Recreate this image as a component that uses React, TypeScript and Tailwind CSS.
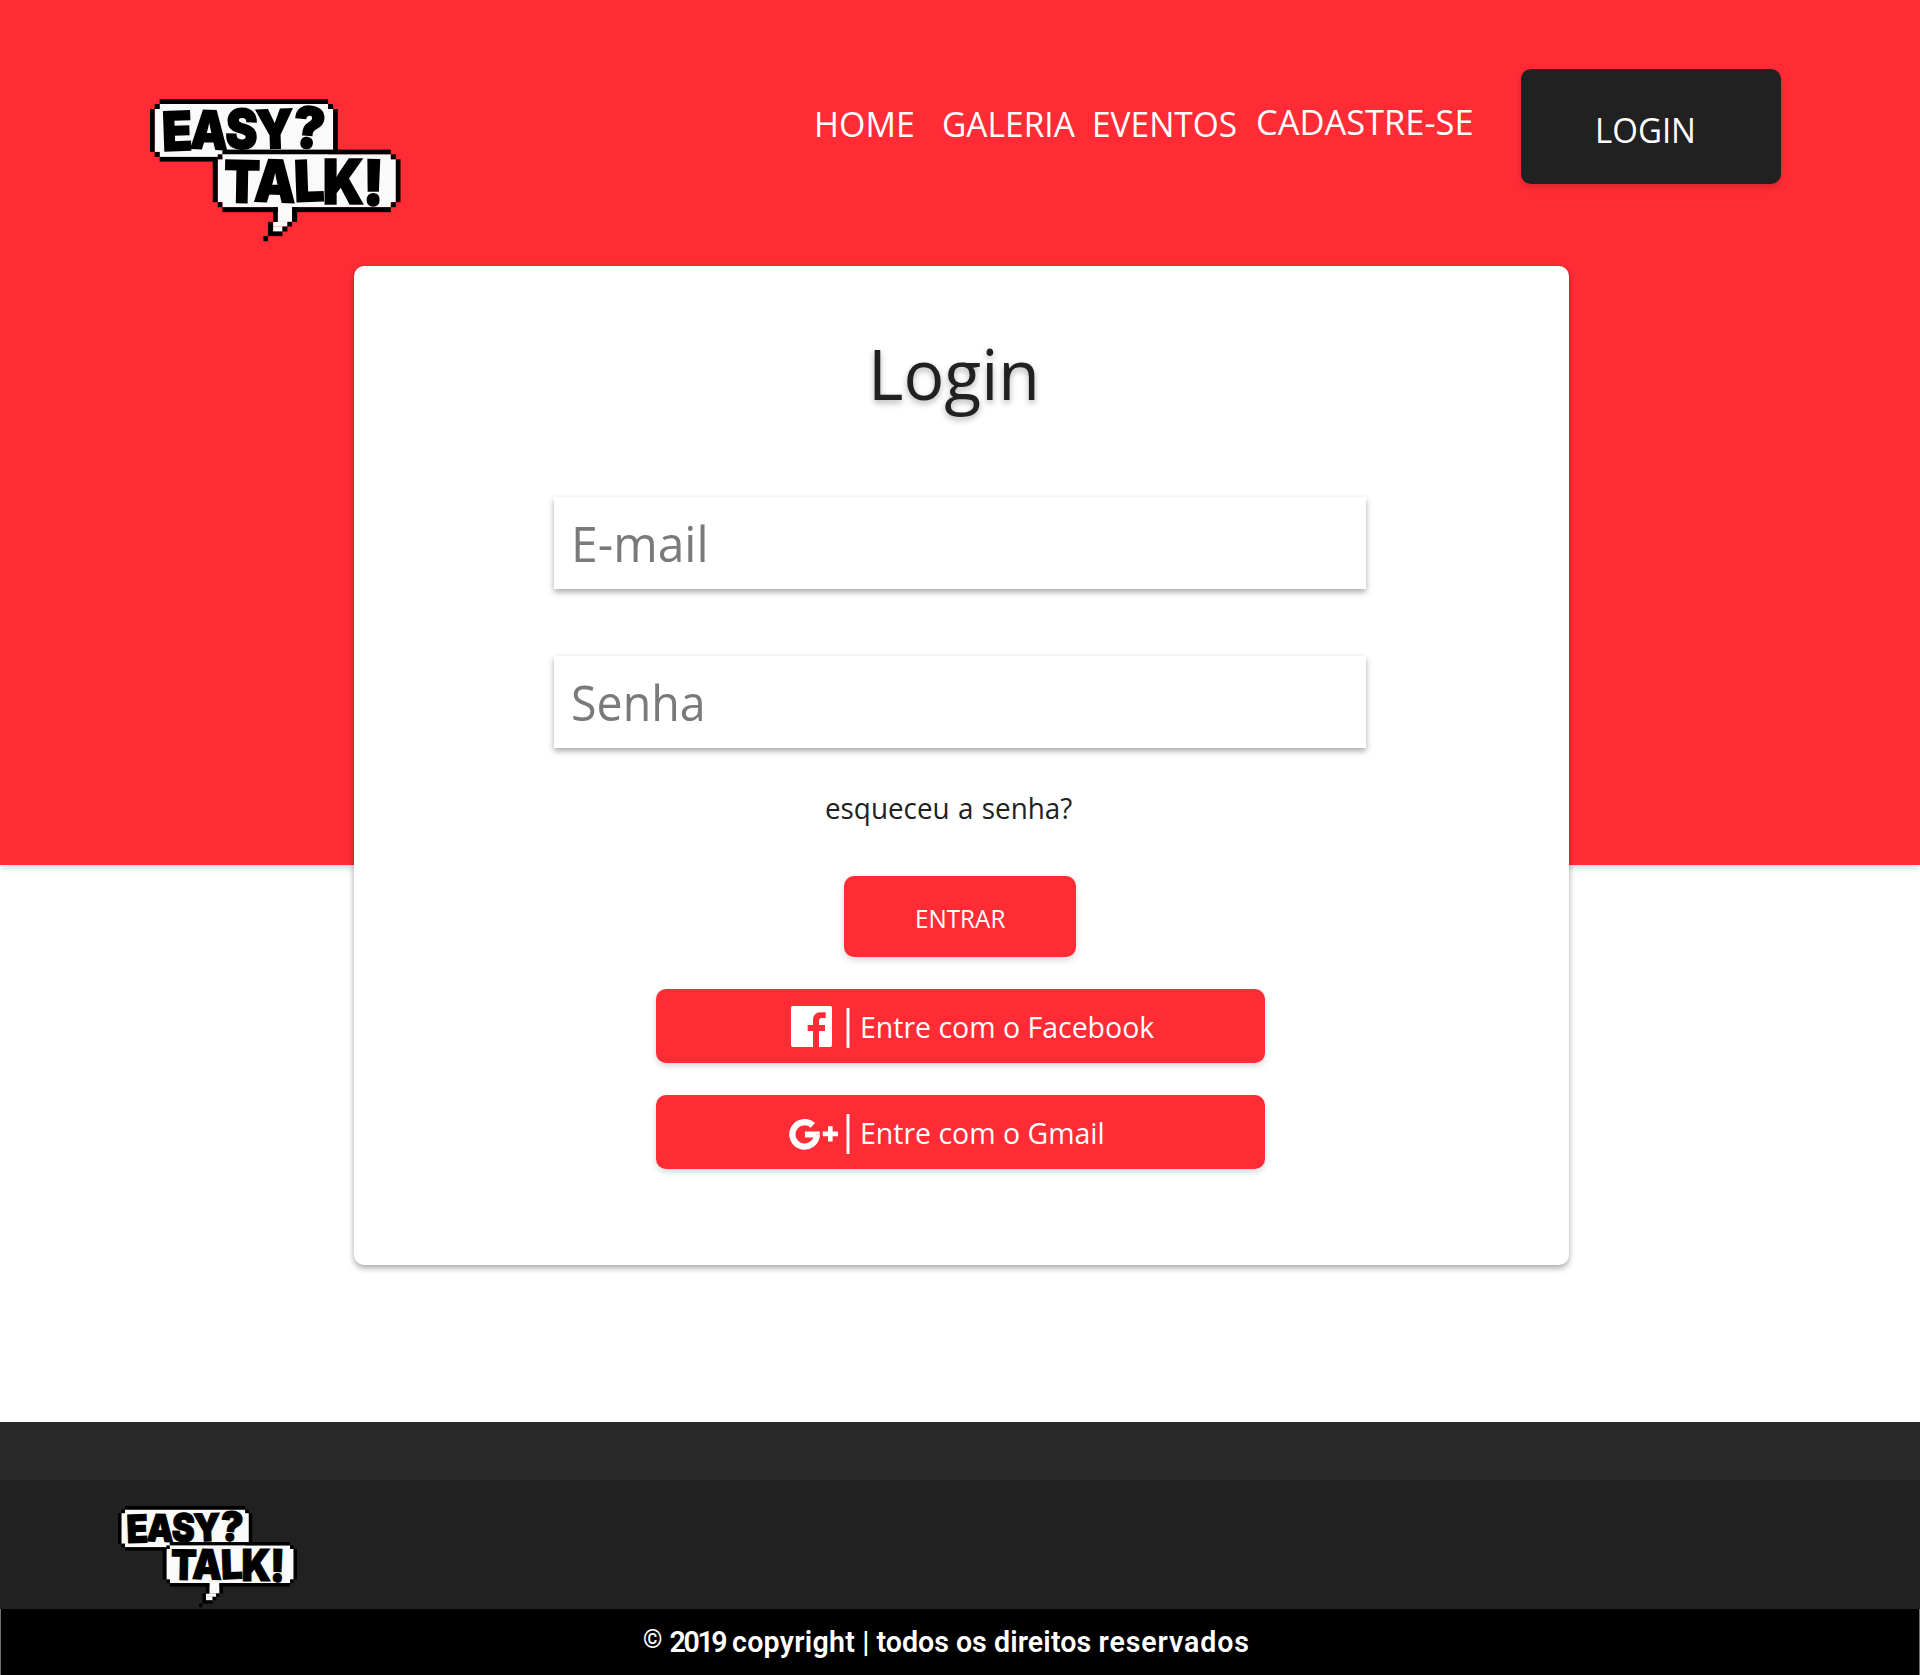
import React from 'react';

type Box = [x: number, y: number, w: number, h: number];

const logoBlack: Box[] = [
  [88, 57, 505, 15], [73, 72, 15, 15], [59, 87, 14, 129], [73, 216, 15, 15], [88, 231, 174, 14],
  [593, 72, 15, 15], [608, 87, 14, 125],
  [276, 209, 505, 14], [262, 223, 14, 15], [781, 223, 15, 15], [247, 238, 15, 129], [796, 238, 14, 129],
  [262, 367, 14, 15], [781, 367, 15, 15], [276, 382, 166, 15], [485, 382, 296, 15],
  [428, 382, 14, 44], [485, 382, 15, 44], [471, 426, 14, 14], [456, 440, 15, 15],
  [428, 455, 28, 14], [413, 426, 15, 43], [399, 469, 14, 15],
];

const logoWhiteBack: Box[] = [[73, 87, 535, 129], [88, 72, 505, 159]];
const logoWhiteFront: Box[] = [
  [262, 238, 534, 129], [276, 223, 505, 159], [442, 380, 43, 46], [428, 426, 43, 14], [428, 440, 28, 15],
];

/* character, left, baseline, width, font size, rotation */
const logoLetters: [string, number, number, number, number, number][] = [
  ['E', 95, 212, 90, 162, -2],
  ['A', 181, 207, 112, 158, 2],
  ['S', 286, 206, 96, 164, 2],
  ['Y', 376, 205, 113, 160, -2],
  ['?', 488, 204, 96, 170, 5],
  ['T', 281, 368, 108, 174, 1],
  ['A', 372, 366, 124, 174, 2],
  ['L', 491, 364, 90, 170, -2],
  ['K', 577, 373, 123, 186, 0],
  ['!', 697, 376, 63, 188, 1],
];

function Rects({ boxes, fill }: { boxes: Box[]; fill: string }) {
  return (
    <g fill={fill}>
      {boxes.map(([x, y, w, h]) => (
        <rect key={`${x}-${y}`} x={x} y={y} width={w} height={h} />
      ))}
    </g>
  );
}

function Logo({ className }: { className: string }) {
  return (
    <svg viewBox="59 57 751 428" preserveAspectRatio="none" className={className} role="img" aria-label="Easy? Talk!">
      <Rects boxes={logoWhiteBack} fill="#fafafa" />
      <Rects boxes={logoWhiteFront} fill="#fafafa" />
      <Rects boxes={logoBlack} fill="#000" />
      <g fontFamily="Inter, sans-serif" fontWeight={900} fill="#000" stroke="#000" strokeWidth={5} strokeLinejoin="miter">
        {logoLetters.map(([ch, x, y, w, size, turn]) => (
          <text
            key={`${ch}${x}`}
            x={x}
            y={y}
            fontSize={size}
            textLength={w}
            lengthAdjust="spacingAndGlyphs"
            transform={`rotate(${turn} ${x + w / 2} ${y - size * 0.36})`}
          >
            {ch}
          </text>
        ))}
      </g>
    </svg>
  );
}

function FacebookIcon() {
  return (
    <svg viewBox="0 0 123 123" className="mt-[17px] ml-[135.5px] size-[41px] shrink-0 fill-white">
      <path d="M5 0H118a5 5 0 0 1 5 5V118a5 5 0 0 1-5 5H84V75H102V57H84V45Q84 36 93 36H104V19H90Q66 19 66 43V57H50V75H66V123H5a5 5 0 0 1-5-5V5a5 5 0 0 1 5-5Z" />
    </svg>
  );
}

function GooglePlusIcon() {
  return (
    <svg viewBox="0 0 148 94" className="mt-[24px] ml-[133.5px] h-[31px] w-[49px] shrink-0">
      <path d="M72 19.5A37 37 0 1 0 84 47" fill="none" stroke="#fff" strokeWidth="19" />
      <path d="M48 38H93V47H82L74 56H48ZM118 22H132V38H148V52H132V68H118V52H102V38H118Z" fill="#fff" />
    </svg>
  );
}

const socialButton =
  'mt-8 ml-[301.5px] flex h-[74px] w-[609px] items-start rounded-[10px] bg-[#ff2c35] text-left text-[30px] leading-[41px] text-white shadow-[0_3px_6px_rgba(0,0,0,0.16)]';

export default function App() {
  return (
    <div className="w-[1920px] bg-white font-['Open_Sans',sans-serif] whitespace-nowrap">
      <header className="flex h-[865px] items-start bg-[#ff2c35] text-[35px] leading-[48px] text-white shadow-[0_3px_6px_rgba(0,0,0,0.16)]">
        <Logo className="mt-[99px] ml-[149.5px] h-[142.5px] w-[250.5px] shrink-0 overflow-visible" />
        <nav className="mt-[100px] ml-[414px] grid grid-cols-[128px_150px_164px_265px]">
          <a className="origin-left scale-x-[0.969]">HOME</a>
          <a className="origin-left scale-x-[0.957]">GALERIA</a>
          <a className="origin-left scale-x-[0.956]">EVENTOS</a>
          <a className="-mt-0.5 origin-left scale-x-[0.984]">CADASTRE-SE</a>
        </nav>
        <button className="mt-[69px] flex h-[115px] w-[260px] items-start rounded-[10px] bg-[#212121] pt-[37px] pl-[74px] shadow-[0_3px_6px_rgba(0,0,0,0.16)]">
          <span className="origin-left scale-x-[0.943]">LOGIN</span>
        </button>
      </header>

      <main className="relative -mt-[599px] mb-[157px] ml-[354px] flex h-[999px] w-[1215px] flex-col items-start rounded-[10px] bg-white shadow-[0_3px_6px_rgba(0,0,0,0.35)]">
        <h1 className="mt-[59px] ml-[514px] origin-left scale-x-[0.97] text-[70px] leading-[96px] text-[#212121] [text-shadow:0_3px_6px_rgba(0,0,0,0.3)]">
          Login
        </h1>
        <label className="mt-[76px] ml-[200px] h-[92px] w-[812px] bg-white pt-3 pl-[17px] text-[50px] leading-[68px] text-[#7a7a7a] shadow-[0_3px_6px_rgba(0,0,0,0.35)]">
          <span className="inline-block origin-left scale-x-[0.961]">E-mail</span>
        </label>
        <label className="mt-[67px] ml-[200px] h-[92px] w-[812px] bg-white pt-3 pl-[17px] text-[50px] leading-[68px] text-[#7a7a7a] shadow-[0_3px_6px_rgba(0,0,0,0.35)]">
          <span className="inline-block origin-left scale-x-[0.931]">Senha</span>
        </label>
        <a className="mt-[39px] ml-[471px] origin-left scale-x-[0.927] text-[30px] leading-[41px] text-[#212121] [word-spacing:1.3px]">
          esqueceu a senha?
        </a>
        <button className="mt-12 ml-[490px] flex h-[81px] w-[232px] items-start rounded-[10px] bg-[#ff2c35] pt-[25px] pl-[71px] text-[25px] leading-[34px] text-white shadow-[0_3px_6px_rgba(0,0,0,0.16)]">
          <span className="origin-left scale-x-[0.97]">ENTRAR</span>
        </button>
        <button className={socialButton}>
          <FacebookIcon />
          <span className="mt-[19px] ml-[14px] h-10 w-1 border-x border-white/50 bg-white bg-clip-padding" />
          <span className="mt-[17px] ml-[9.5px] origin-left scale-x-[0.949]">Entre com o Facebook</span>
        </button>
        <button className={socialButton}>
          <GooglePlusIcon />
          <span className="mt-[19px] ml-[8px] h-10 w-1 border-x border-white/50 bg-white bg-clip-padding" />
          <span className="mt-[17px] ml-[9.5px] origin-left scale-x-[0.949]">Entre com o Gmail</span>
        </button>
      </main>

      <footer>
        <div className="h-[58px] bg-[#292929]" />
        <div className="h-[129px] bg-[#212121] pt-[26px] pl-[118px]">
          <Logo className="h-[101.5px] w-[179px] overflow-visible" />
        </div>
        <p className="flex h-[66px] items-start border-x border-[#707070] bg-black pt-[15px] pl-[642px] font-['Roboto',sans-serif] text-[30px] leading-[35px] font-semibold text-white">
          <span className="inline-block origin-left scale-x-[0.952]">
            <span className="relative -top-[4px] text-[26px] font-bold">©</span>{' '}
            <span className="-mr-[0.5px] tracking-[-2.5px]">2019</span>{' '}
            <span className="tracking-[0.3px]">copyright</span> | <span>todos</span> os{' '}
            <span className="tracking-[0.15px]">direitos</span> <span className="tracking-[0.95px]">reservados</span>
          </span>
        </p>
      </footer>
    </div>
  );
}
